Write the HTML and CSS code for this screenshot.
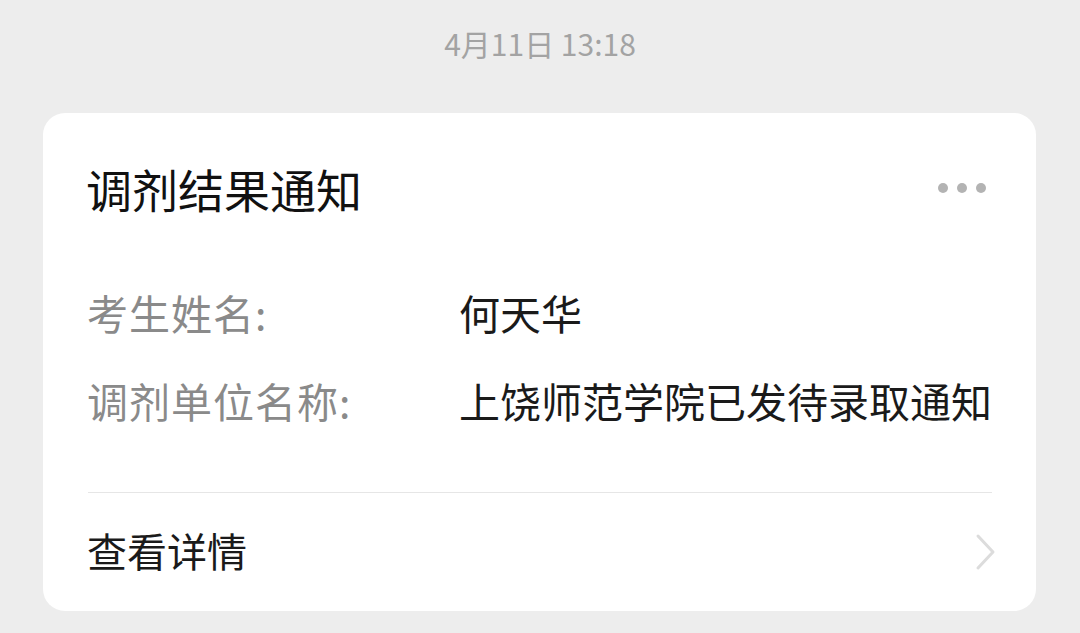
FILE: index.html
```html
<!DOCTYPE html>
<html lang="zh-CN">
<head>
<meta charset="utf-8">
<link rel="stylesheet" href="styles.css">
</head>
<body>
<div class="time">4月11日 13:18</div>
<div class="card">
  <div class="head">
    <div class="title">调剂结果通知</div>
    <div class="dots"><span></span><span></span><span></span></div>
  </div>
  <div class="rows">
    <div class="row"><div class="label">考生姓名:</div><div class="value">何天华</div></div>
    <div class="row"><div class="label">调剂单位名称:</div><div class="value">上饶师范学院已发待录取通知</div></div>
  </div>
  <div class="divider"></div>
  <div class="foot">
    <div class="more">查看详情</div>
    <svg class="chev" width="24" height="40" viewBox="0 0 24 40"><path d="M4 4 L19 20 L4 36" fill="none" stroke="#dcdcdc" stroke-width="3" stroke-linecap="round" stroke-linejoin="round"/></svg>
  </div>
</div>
</body>
</html>
```
FILE: styles.css
```css
html, body {
  margin: 0;
  padding: 0;
  background: #ededed;
  font-family: "Noto Sans CJK SC", "Noto Sans", sans-serif;
  width: 1080px;
  height: 633px;
  overflow: hidden;
}
.time {
  height: 113px;
  box-sizing: border-box;
  padding-top: 23px;
  text-align: center;
  font-size: 30px;
  line-height: 40px;
  color: #a3a3a3;
}
.card {
  margin: 0 44px 0 43px;
  background: #fff;
  border-radius: 22px;
  padding: 47px 44px 0 45px;
  height: 498px;
  box-sizing: border-box;
}
.head {
  display: flex;
  align-items: center;
  justify-content: space-between;
  height: 56px;
}
.title {
  font-size: 46px;
  line-height: 56px;
  color: #111;
  margin-left: -2px;
}
.dots {
  display: flex;
  gap: 9px;
  margin-right: 6px;
}
.dots span {
  width: 10px;
  height: 10px;
  border-radius: 50%;
  background: #b3b3b3;
}
.rows {
  margin-top: 52px;
}
.row {
  display: flex;
  height: 88px;
  align-items: center;
  font-size: 41px;
}
.label {
  width: 371px;
  color: #8a8a8a;
  letter-spacing: 1px;
  margin-left: -1px;
}
.value {
  color: #1a1a1a;
  margin-left: 1px;
}
.divider {
  margin-top: 48px;
  height: 1px;
  background: #e6e6e6;
}
.foot {
  display: flex;
  align-items: center;
  justify-content: space-between;
  height: 118px;
  margin-right: -6px;
}
.more {
  font-size: 40px;
  color: #1a1a1a;
  margin-bottom: 4px;
  margin-left: -1px;
}
.chev {
  display: block;
}
```
